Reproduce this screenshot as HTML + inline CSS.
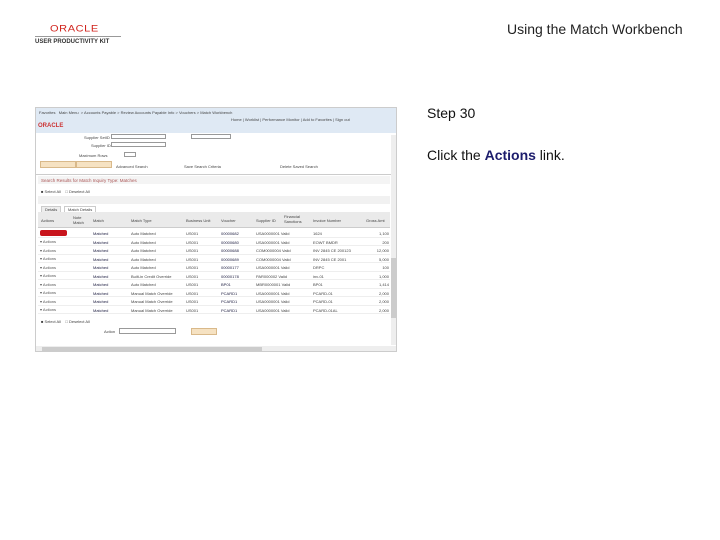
<!DOCTYPE html>
<html><head><meta charset="utf-8"><style>
*{margin:0;padding:0;box-sizing:border-box}
body{width:720px;height:540px;background:#fff;position:relative;overflow:hidden;font-family:"Liberation Sans",sans-serif}
.a{position:absolute;white-space:nowrap}
.s{font-size:4px;color:#444}
.l{font-size:4px;color:#224}
</style></head><body>
<div class="a" style="left:50px;top:23px;font-size:11px;color:#d0221b;letter-spacing:0.6px;transform:scaleY(0.85)">ORACLE</div>
<div class="a" style="left:35px;top:36px;width:86px;height:1px;background:#999"></div>
<div class="a" style="left:35px;top:39px;font-size:6px;font-weight:bold;color:#333">USER PRODUCTIVITY KIT</div>
<div class="a" style="left:507px;top:21px;font-size:14px;color:#222">Using the Match Workbench</div>
<div class="a" style="left:427px;top:105px;font-size:14px;color:#111">Step 30</div>
<div class="a" style="left:427px;top:147px;font-size:14px;color:#111">Click the <b style="color:#1c1c6c">Actions</b> link.</div>

<div class="a" style="left:35px;top:107px;width:362px;height:245px;border:1px solid #ccc;background:#fff;overflow:hidden">
 <div class="a" style="left:0;top:0;width:362px;height:25px;background:#dfe9f4"></div>
 <div class="a s" style="left:3px;top:2px">Favorites &nbsp; Main Menu &nbsp;&gt; Accounts Payable &gt; Review Accounts Payable Info &gt; Vouchers &gt; Match Workbench</div>
 <div class="a s" style="left:195px;top:9px">Home | Worklist | Performance Monitor | Add to Favorites | Sign out</div>
 <div class="a" style="left:2px;top:15px;font-size:6px;font-weight:bold;color:#c33">ORACLE</div>
 <div class="a s" style="left:48px;top:27px">Supplier SetID</div><div class="a" style="left:75px;top:26px;width:55px;height:5px;border:1px solid #999"></div>
 <div class="a" style="left:155px;top:26px;width:40px;height:5px;border:1px solid #999"></div>
 <div class="a s" style="left:55px;top:35px">Supplier ID</div><div class="a" style="left:75px;top:34px;width:55px;height:5px;border:1px solid #999"></div>
 <div class="a s" style="left:43px;top:45px">Maximum Rows</div><div class="a" style="left:88px;top:44px;width:12px;height:5px;border:1px solid #999"></div>
 <div class="a" style="left:4px;top:53px;width:36px;height:7px;background:#f6e2c2;border:1px solid #d9b98a"></div>
 <div class="a" style="left:40px;top:53px;width:36px;height:7px;background:#f6e2c2;border:1px solid #d9b98a"></div>
 <div class="a s" style="left:80px;top:56px">Advanced Search</div>
 <div class="a s" style="left:148px;top:56px">Save Search Criteria</div>
 <div class="a s" style="left:244px;top:56px">Delete Saved Search</div>
 <div class="a" style="left:0;top:66px;width:355px;height:1px;background:#ccc"></div>
 <div class="a" style="left:2px;top:68px;width:352px;height:8px;background:#f4f4f4;font-size:4.5px;color:#a55;padding:2px 3px">Search Results for Match Inquiry Type: Matches</div>
 <div class="a s" style="left:5px;top:81px">&#9632; Select All &nbsp;&nbsp; &#9633; Deselect All</div>
 <div class="a" style="left:2px;top:88px;width:352px;height:8px;background:#f1f1f1"></div>
 <div class="a" style="left:355px;top:27px;width:6px;height:210px;background:#eee"></div>
 <div class="a" style="left:355px;top:150px;width:6px;height:60px;background:#ccc"></div>
 <div class="a s" style="left:5px;top:98px;border:1px solid #ccc;background:#eee;padding:0 3px">Details</div>
 <div class="a s" style="left:28px;top:98px;border:1px solid #ccc;padding:0 3px">Match Details</div>
 <div class="a" style="left:2px;top:104px;width:352px;height:16px;background:#eaeaea;border-bottom:1px solid #ccc"></div>
 <div class="a s" style="left:5px;top:110px">Actions</div><div class="a s" style="left:37px;top:107px">Note<br>Match</div>
 <div class="a s" style="left:57px;top:110px">Match</div><div class="a s" style="left:95px;top:110px">Match Type</div>
 <div class="a s" style="left:150px;top:110px">Business Unit</div><div class="a s" style="left:185px;top:110px">Voucher</div>
 <div class="a s" style="left:220px;top:110px">Supplier ID</div><div class="a s" style="left:248px;top:106px">Financial<br>Sanctions</div>
 <div class="a s" style="left:277px;top:110px">Invoice Number</div><div class="a s" style="left:330px;top:110px">Gross Amt</div>
 <div class="a" style="left:2px;top:121px;width:352px;height:85px;background:repeating-linear-gradient(#fff 0 8px,#ddd 8px 8.5px)"></div>
 <div class="a" style="left:4px;top:122px;width:27px;height:6px;background:#c8141c;border-radius:2px"></div>
 <div class="a" style="left:4px;top:130px;font-size:4px;line-height:8.5px;color:#555">&#9662; Actions<br>&#9662; Actions<br>&#9662; Actions<br>&#9662; Actions<br>&#9662; Actions<br>&#9662; Actions<br>&#9662; Actions<br>&#9662; Actions<br>&#9662; Actions</div>
 <div class="a l" style="left:57px;top:122px;line-height:8.5px">Matched<br>Matched<br>Matched<br>Matched<br>Matched<br>Matched<br>Matched<br>Matched<br>Matched<br>Matched</div>
 <div class="a s" style="left:95px;top:122px;line-height:8.5px">Auto Matched<br>Auto Matched<br>Auto Matched<br>Auto Matched<br>Auto Matched<br>Built-in Credit Override<br>Auto Matched<br>Manual Match Override<br>Manual Match Override<br>Manual Match Override</div>
 <div class="a s" style="left:150px;top:122px;line-height:8.5px">US001<br>US001<br>US001<br>US001<br>US001<br>US001<br>US001<br>US001<br>US001<br>US001</div>
 <div class="a l" style="left:185px;top:122px;line-height:8.5px">00000682<br>00000680<br>00000688<br>00000689<br>00000177<br>00000178<br>BP01<br>PCARD1<br>PCARD1<br>PCARD1</div>
 <div class="a s" style="left:220px;top:122px;line-height:8.5px">USA0000001 Valid<br>USA0000001 Valid<br>COM0000004 Valid<br>COM0000004 Valid<br>USA0000001 Valid<br>PAR000002 Valid<br>MBR0000001 Valid<br>USA0000001 Valid<br>USA0000001 Valid<br>USA0000001 Valid</div>
 <div class="a s" style="left:277px;top:122px;line-height:8.5px">1624<br>EOWT BMDR<br>INV 2845 CE 200123<br>INV 2845 CE 2001<br>DRPC<br>inv-01<br>BP01<br>PCARD-01<br>PCARD-01<br>PCARD-01AL</div>
 <div class="a s" style="left:335px;top:122px;line-height:8.5px;text-align:right;width:18px">1,100<br>200<br>12,000<br>5,000<br>100<br>1,000<br>1,414<br>2,000<br>2,000<br>2,000</div>
 <div class="a s" style="left:5px;top:211px">&#9632; Select All &nbsp;&nbsp; &#9633; Deselect All</div>
 <div class="a s" style="left:68px;top:221px">Action</div><div class="a" style="left:83px;top:220px;width:57px;height:6px;border:1px solid #999"></div>
 <div class="a" style="left:155px;top:220px;width:26px;height:7px;background:#f6e2c2;border:1px solid #d9b98a"></div>
 <div class="a" style="left:0;top:238px;width:362px;height:6px;background:#eee"></div>
 <div class="a" style="left:6px;top:239px;width:220px;height:4px;background:#ccc"></div>
</div>
</body></html>
